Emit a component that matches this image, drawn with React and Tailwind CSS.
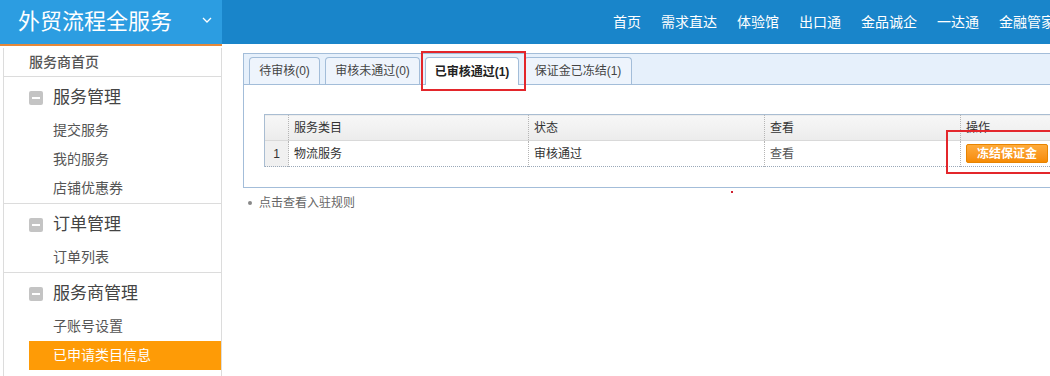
import React from 'react';

const FONT = { fontFamily: '"Liberation Sans", "Noto Sans CJK SC", sans-serif' };

const navItems = ['首页', '需求直达', '体验馆', '出口通', '金品诚企', '一达通', '金融管家'];

const groups = [
  { title: '服务管理', items: ['提交服务', '我的服务', '店铺优惠券'] },
  { title: '订单管理', items: ['订单列表'] },
  { title: '服务商管理', items: ['子账号设置', '已申请类目信息'], active: '已申请类目信息' },
];

const tabs = [
  { label: '待审核(0)', w: 'w-[71px]' },
  { label: '审核未通过(0)', w: 'w-[95px]' },
  { label: '已审核通过(1)', w: 'w-[94px]', active: true },
  { label: '保证金已冻结(1)', w: 'w-[108px]' },
];

function MinusIcon() {
  return (
    <span className="flex h-[14px] w-[14px] items-center justify-center rounded-[2px] bg-[#c4c4c4]">
      <span className="h-[2px] w-[8px] bg-white" />
    </span>
  );
}

function Sidebar() {
  return (
    <aside className="ml-[3px] mt-[4px] w-[219px] shrink-0 border-x border-[#dcdcdc] pb-2">
      <div className="flex h-[29px] items-center border-b border-[#dcdcdc] pl-[25px] text-[14px] font-medium text-[#555]">
        服务商首页
      </div>
      {groups.map((g, gi) => (
        <div key={g.title} className={gi < groups.length - 1 ? 'border-b border-[#dcdcdc]' : ''}>
          <div className="mt-[8px] mb-[5px] flex h-[26px] items-center gap-[10px] pl-[25px]">
            <MinusIcon />
            <span className="text-[17px] text-[#444]">{g.title}</span>
          </div>
          {g.items.map((it) =>
            it === g.active ? (
              <div key={it} className="ml-[25px] flex h-[29px] items-center bg-[#fe9b06] pl-[24px] text-[14px] text-white">
                {it}
              </div>
            ) : (
              <div key={it} className="flex h-[29px] items-center pl-[49px] text-[14px] text-[#555]">
                {it}
              </div>
            )
          )}
        </div>
      ))}
    </aside>
  );
}

function Header() {
  return (
    <header className="flex h-[44px] bg-[#1985ca]">
      <div className="flex h-[46px] w-[222px] shrink-0 items-center justify-between border-b-2 border-[#e5883a] bg-[#2c9de1] pl-[18px] pr-[10px]">
        <span className="text-[22px] leading-none text-white">外贸流程全服务</span>
        <svg width="10" height="6" viewBox="0 0 10 6" className="mb-[4px]">
          <path d="M1 1l4 4 4-4" fill="none" stroke="white" strokeWidth="1.3" />
        </svg>
      </div>
      <nav className="ml-[391px] flex items-center gap-[20px] whitespace-nowrap text-[14px] text-white">
        {navItems.map((n) => (
          <span key={n}>{n}</span>
        ))}
      </nav>
    </header>
  );
}

function Content() {
  const th = 'border-l border-dotted border-[#b5b5b5] pl-[5px] text-left font-normal';
  return (
    <main className="relative flex-1 pl-[21px] pt-[9px]">
      <div className="w-[840px] border border-[#a3bdd9]">
        <div className="flex h-[30px] items-end gap-[5px] bg-[#e6f0fb] pl-[5px]">
          {tabs.map((t) => (
            <div
              key={t.label}
              className={`${t.w} flex h-[27px] items-center justify-center rounded-t-[4px] border border-b-0 border-[#a3bdd9] text-[12px] ${
                t.active ? 'h-[28px] -mb-px bg-white font-bold text-[#222]' : 'bg-[#eef4fc] text-[#444]'
              }`}
            >
              {t.label}
            </div>
          ))}
        </div>
        <div className="border-t border-[#a3bdd9] px-[20px] pt-[29px] pb-[20px]">
          <table className="w-[810px] table-fixed border-collapse text-[12px] text-[#333]">
            <colgroup>
              <col className="w-[24px]" />
              <col className="w-[240px]" />
              <col className="w-[236px]" />
              <col className="w-[196px]" />
              <col />
            </colgroup>
            <thead>
              <tr className="h-[26px] border-t border-[#a9bdd2] border-b border-b-[#d9d9d9] bg-gradient-to-b from-[#f7f7f7] to-[#ececec]">
                <th className="border-l border-[#a9bdd2]" />
                <th className={th}>服务类目</th>
                <th className={th}>状态</th>
                <th className={th}>查看</th>
                <th className={th}>操作</th>
              </tr>
            </thead>
            <tbody>
              <tr className="h-[26px] border-b border-dotted border-[#9aa8b8]">
                <td className="border-l border-[#a9bdd2] bg-[#f0f0f0] text-center">1</td>
                <td className={th}>物流服务</td>
                <td className={th}>审核通过</td>
                <td className={`${th} text-[#555]`}>查看</td>
                <td className={th}>
                  <button className="flex h-[19px] w-[82px] items-center justify-center rounded-[2px] border border-[#e88400] bg-gradient-to-b from-[#ffab3a] to-[#f68b00] text-[12px] font-bold text-white">
                    冻结保证金
                  </button>
                </td>
              </tr>
            </tbody>
          </table>
        </div>
      </div>
      <div className="mt-[6px] flex items-center gap-[7px] pl-[5px] text-[12px] text-[#666]">
        <span className="h-[4px] w-[4px] rounded-full bg-[#888]" />
        点击查看入驻规则
      </div>

      {/* annotation boxes */}
      <div className="pointer-events-none absolute left-[199px] top-[7px] h-[40px] w-[105px] border-2 border-[#e3262b]" />
      <div className="pointer-events-none absolute left-[724px] top-[86px] h-[44px] w-[110px] border-2 border-[#e3262b]" />
      <span className="absolute left-[509px] top-[147px] h-[2px] w-[2px] bg-[#d02030]" />
    </main>
  );
}

export default function App() {
  return (
    <div className="h-[376px] w-[1050px] overflow-hidden bg-white" style={FONT}>
      <Header />
      <div className="flex">
        <Sidebar />
        <Content />
      </div>
    </div>
  );
}
